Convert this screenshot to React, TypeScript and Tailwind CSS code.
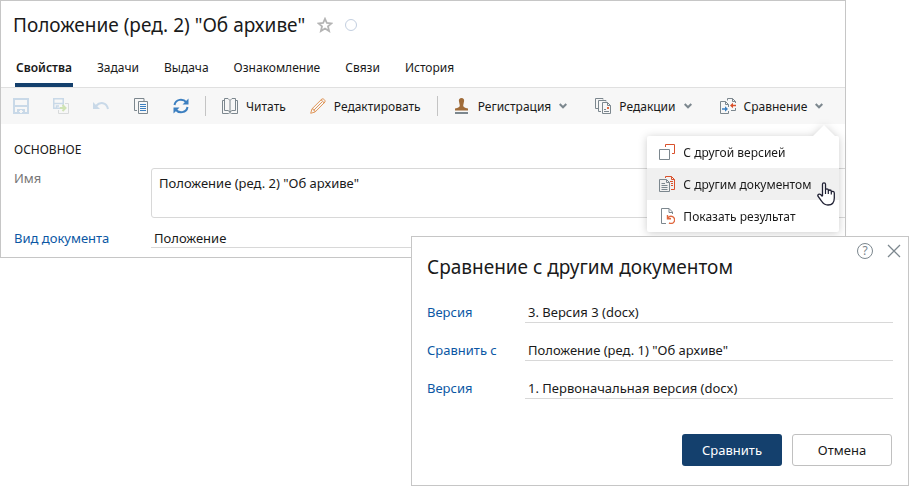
import { useState, type ReactNode } from 'react';
import clsx from 'clsx';

const tabs = [
  'Свойства',
  'Задачи',
  'Выдача',
  'Ознакомление',
  'Связи',
  'История',
];

function Icon({ children, size = 16 }: { children: ReactNode; size?: number }) {
  return (
    <svg
      width={size}
      height={size}
      viewBox={`0 0 ${size} ${size}`}
      fill="none"
      className="shrink-0"
      aria-hidden="true"
    >
      {children}
    </svg>
  );
}

function SaveIcon() {
  return (
    <Icon>
      <path d="M1 1H15V15H1ZM2 8H14M5 15V12H11V15" stroke="#c9d9e8" strokeWidth="2" />
      <path d="M7 12H9V15H7Z" fill="#f7f7f7" />
    </Icon>
  );
}

function SaveCloseIcon() {
  return (
    <Icon>
      <path d="M.75.75H10.25V10.25H.75ZM1 5.5H10M3.5 10V8H6" stroke="#c9d9e8" strokeWidth="1.5" />
      <path d="M12 5.5H15.5V15.5H5.5V12" stroke="#d8dadb" />
      <path d="M7 10H12M9.5 7L12.5 10L9.5 13" stroke="#cfe3b4" strokeWidth="2" />
    </Icon>
  );
}

function UndoIcon() {
  return (
    <Icon>
      <path d="M3 8C7 3.5 13.5 4 15 11" stroke="#c9d9e8" strokeWidth="2" />
      <path d="M0 4V11H7Z" fill="#c9d9e8" />
    </Icon>
  );
}

function CopyIcon() {
  return (
    <Icon>
      <path d="M11 3V.5H1.5V12.5H4" stroke="#7c878e" />
      <path d="M5.5 3.5H14.5V15.5H5.5Z" stroke="#7c878e" />
      <path d="M7 6.5H13M7 8.5H13M7 10.5H13M7 12.5H13" stroke="#3c7fc0" />
    </Icon>
  );
}

function RefreshIcon() {
  return (
    <Icon>
      <path d="M1.5 7C2.5 1 10 .2 13.5 4.5M14.5 9C13.5 15 6 15.8 2.5 11.5" stroke="#3c7fc0" strokeWidth="2" />
      <path d="M15.5 .5V6.5H9.5ZM.5 15.5V9.5H6.5Z" fill="#3c7fc0" />
    </Icon>
  );
}

function BookIcon() {
  return (
    <Icon>
      <path
        d="M2.5 .5H6L8 2.5L10 .5H13.5V12.5H10L8 14L6 12.5H2.5ZM8 2.5V14M2.5 2.5H.5V15.5H6.5L8 14.5L9.5 15.5H15.5V2.5H13.5"
        stroke="#7c878e"
      />
    </Icon>
  );
}

function PencilIcon() {
  return (
    <Icon>
      <path
        d="M.7 15.3L2 10.8L12 .9C13.5 .3 15.7 2.4 15 4L5.1 14L.7 15.3ZM2 10.8C3.7 11 5 12.2 5.1 14M10.7 2.2C12.2 2.3 13.7 3.8 13.8 5.3M3.5 12.5L12.3 3.7"
        stroke="#e0975a"
      />
    </Icon>
  );
}

function StampIcon() {
  return (
    <Icon>
      <path
        d="M7.5 0C9.4 0 10.3 1.4 10.1 3L9.2 7.5C9.2 9 10.5 9.8 14 10.5V12.5H1V10.5C4.5 9.8 5.8 9 5.8 7.5L4.9 3C4.7 1.4 5.6 0 7.5 0Z"
        fill="#a06c3a"
      />
      <path d="M1 14H14V16H1Z" fill="#7c878e" />
    </Icon>
  );
}

function EditionsIcon() {
  return (
    <Icon>
      <path d="M8 1.5V.5H.5V10.5H3M11 3.5V2.5H3.5V13.5H6" stroke="#7c878e" />
      <path d="M7.5 4.5H12.5L15.5 7.5V15.5H7.5ZM12.5 4.5V7.5H15.5M9 13.5H14" stroke="#7c878e" />
      <path d="M12 9H14V11H12Z" fill="#e0683f" />
      <path d="M9 11.5H11" stroke="#7c878e" />
    </Icon>
  );
}

function CompareIcon() {
  return (
    <Icon>
      <path d="M8.5 9V6.5L5.5 3.5H.5V15.5H8.5V13M5.5 3.5V6.5H8.5" stroke="#7c878e" />
      <path d="M7.5 2.5V.5H12.5L15.5 3.5V5M12.5 .5V3.5H15.5M15.5 10V12.5H11" stroke="#7c878e" />
      <path d="M2 11H6" stroke="#3c7fc0" strokeWidth="1.5" />
      <path d="M5 8.2L8 11L5 13.8Z" fill="#3c7fc0" />
      <path d="M12 7.5H16" stroke="#d9512c" strokeWidth="1.5" />
      <path d="M13 4.7L10 7.5L13 10.3Z" fill="#d9512c" />
    </Icon>
  );
}

function VersionsIcon() {
  return (
    <Icon>
      <path d="M6.5 3V.5H15.5V9.5H13" stroke="#d9512c" />
      <path d="M.5 5.5H10.5V15.5H.5Z" stroke="#7c878e" />
    </Icon>
  );
}

function DocumentsIcon() {
  return (
    <Icon>
      <path d="M6.5 2V.5H12.5L15.5 3.5V13.5H12M12.5 .5V3.5H15.5M11 5.5H14M12 7.5H14M12 9.5H14" stroke="#d9512c" />
      <path d="M.5 3.5H7.5L10.5 6.5V15.5H.5ZM7.5 3.5V6.5H10.5M2.5 7.5H6M2.5 9.5H8.5M2.5 11.5H8.5M2.5 13.5H8.5" stroke="#7c878e" />
    </Icon>
  );
}

function ResultIcon() {
  return (
    <Icon>
      <path d="M7 15.5H2.5V.5H10L13.5 4V6M10 .5V4.5H13.5" stroke="#7c878e" />
      <path d="M8.7 10.5A3.6 3.6 0 1 1 10 14.9M8.5 7V10.7H12" stroke="#e0683f" strokeWidth="1.4" />
    </Icon>
  );
}

function Chevron() {
  return (
    <Icon size={8}>
      <path d="M.7 2L4 5.3L7.3 2" stroke="#7c878e" strokeWidth="2" />
    </Icon>
  );
}

function HandCursor() {
  return (
    <svg
      width="18"
      height="24"
      viewBox="0 0 18 24"
      className="pointer-events-none absolute top-[46px] right-1"
      aria-hidden="true"
    >
      <path
        d="M5.5 14V2.2C5.5 .3 8.5 .3 8.5 2.2V8C8.5 6.4 11.3 6.4 11.3 8V9C11.6 7.5 14.3 7.7 14.3 9.4V10.2C14.8 9 17.3 9.2 17.3 11V16C17.3 20.5 14.8 23 11 23C7.3 23 6 21.5 4.5 19L1 14.2C.2 12.5 2.4 11.6 3.6 12.6L5.5 14.5"
        fill="#fff"
        stroke="#1f2033"
        strokeWidth="1.3"
      />
      <path d="M8.5 8V12M11.3 9V12M14.3 10V12.5" stroke="#1f2033" strokeWidth="1.2" />
    </svg>
  );
}

function ToolButton({
  icon,
  label,
  hasMenu = false,
}: {
  icon: ReactNode;
  label: string;
  hasMenu?: boolean;
}) {
  return (
    <button
      type="button"
      className="flex h-9 cursor-pointer items-center gap-2 whitespace-nowrap"
    >
      {icon}
      <span className="pt-0.5">{label}</span>
      {hasMenu && <Chevron />}
    </button>
  );
}

function CompareMenu() {
  const items = [
    { label: 'С другой версией', icon: <VersionsIcon /> },
    { label: 'С другим документом', icon: <DocumentsIcon /> },
    { label: 'Показать результат', icon: <ResultIcon /> },
  ];

  return (
    <div className="absolute top-12 -right-4 z-10 w-48 drop-shadow-[0_1px_4px_rgba(0,0,0,0.2)]">
      <svg
        width="22"
        height="11"
        viewBox="0 0 22 11"
        className="absolute -top-[11px] right-1"
        aria-hidden="true"
      >
        <path d="M0 11L11 0L22 11Z" fill="#fff" />
      </svg>
      <ul className="overflow-hidden rounded-xs bg-white">
        {items.map((item, index) => (
          <li key={item.label}>
            <button
              type="button"
              className={clsx(
                'flex h-8 w-full cursor-pointer items-center gap-2 pl-3 whitespace-nowrap',
                index === 1 && 'bg-[#f0f0f0]'
              )}
            >
              {item.icon}
              <span className="pt-0.5">{item.label}</span>
            </button>
          </li>
        ))}
      </ul>
      <HandCursor />
    </div>
  );
}

function Divider() {
  return <span className="mx-4 h-5 w-px shrink-0 bg-[#c4c4c4]" />;
}

function Toolbar() {
  const actions = [
    { label: 'Сохранить', icon: <SaveIcon /> },
    { label: 'Сохранить и закрыть', icon: <SaveCloseIcon /> },
    { label: 'Отменить', icon: <UndoIcon /> },
    { label: 'Копировать', icon: <CopyIcon /> },
    { label: 'Обновить', icon: <RefreshIcon /> },
  ];

  return (
    <div className="flex h-[37px] items-center border-t border-[#e0e0e0] bg-[#f7f7f7] pl-3 text-xs">
      <div className="flex gap-6">
        {actions.map((action) => (
          <button
            key={action.label}
            type="button"
            aria-label={action.label}
            className="cursor-pointer"
          >
            {action.icon}
          </button>
        ))}
      </div>
      <Divider />
      <div className="flex gap-6">
        <ToolButton icon={<BookIcon />} label="Читать" />
        <ToolButton icon={<PencilIcon />} label="Редактировать" />
      </div>
      <Divider />
      <div className="flex gap-7">
        <ToolButton icon={<StampIcon />} label="Регистрация" hasMenu />
        <ToolButton icon={<EditionsIcon />} label="Редакции" hasMenu />
        <div className="relative">
          <ToolButton icon={<CompareIcon />} label="Сравнение" hasMenu />
          <CompareMenu />
        </div>
      </div>
    </div>
  );
}

function DocumentCard() {
  const [activeTab, setActiveTab] = useState('Свойства');

  return (
    <main className="mr-[63px] border border-[#c6c6c6] pb-[9px]">
      <header className="flex h-12 items-center gap-3 pl-3">
        <h1 className="text-[19px] leading-6">
          Положение (ред. 2) "Об архиве"
        </h1>
        <button type="button" aria-label="В избранное" className="cursor-pointer">
          <Icon>
            <path
              d="M8 1.8L9.9 6L14.5 6.4L11 9.4L12.1 14L8 11.5L3.9 14L5 9.4L1.5 6.4L6.1 6Z"
              stroke="#b4b4b4"
              strokeWidth="1.8"
            />
          </Icon>
        </button>
        <span className="size-3 rounded-full border border-[#c3cfe0]" />
      </header>
      <nav className="flex h-[38px] gap-[23px] pl-[14px] text-xs">
        {tabs.map((tab) => (
          <button
            key={tab}
            type="button"
            onClick={() => setActiveTab(tab)}
            className={clsx(
              'cursor-pointer border-b-4 px-px pt-1',
              tab === activeTab
                ? 'border-[#14406d] font-semibold'
                : 'border-transparent'
            )}
          >
            {tab}
          </button>
        ))}
      </nav>
      <Toolbar />
      <form className="grid grid-cols-[137px_1fr] overflow-hidden pl-[13px] text-[13px]">
        <h2 className="col-span-2 h-11 pt-4 text-xs leading-5">ОСНОВНОЕ</h2>
        <label htmlFor="name" className="leading-5 text-[#777]">
          Имя
        </label>
        <textarea
          id="name"
          defaultValue={'Положение (ред. 2) "Об архиве"'}
          className="-mr-2 h-[50px] resize-none rounded-[3px] border border-[#d8d8d8] px-[7px] py-1 leading-5"
        />
        <label htmlFor="kind" className="pt-[10px] leading-5 text-[#0b57a4]">
          Вид документа
        </label>
        <input
          id="kind"
          defaultValue="Положение"
          className="mt-[10px] h-5 border-b border-[#d8d8d8] px-[3px]"
        />
      </form>
    </main>
  );
}

function CompareDialog() {
  const fields = [
    { id: 'version', label: 'Версия', value: '3. Версия 3 (docx)' },
    {
      id: 'compare-with',
      label: 'Сравнить с',
      value: 'Положение (ред. 1) "Об архиве"',
    },
    {
      id: 'other-version',
      label: 'Версия',
      value: '1. Первоначальная версия (docx)',
    },
  ];

  return (
    <section
      role="dialog"
      aria-labelledby="dialog-title"
      className="relative z-20 -mt-[22px] ml-auto w-[498px] border border-[#c6c6c6] bg-white px-[15px] pb-[19px]"
    >
      <div className="-mr-2 flex h-14 justify-between">
        <h2 id="dialog-title" className="pt-[18px] text-[19px] leading-6">
          Сравнение с другим документом
        </h2>
        <div className="flex h-7 items-center gap-[14px] text-[#7c878e]">
          <button type="button" aria-label="Справка" className="size-4 cursor-pointer rounded-full border border-current text-xs leading-[14px]">
            ?
          </button>
          <button type="button" aria-label="Закрыть" className="cursor-pointer">
            <Icon size={14}>
              <path d="M1 1L13 13M13 1L1 13" stroke="currentColor" strokeWidth="1.3" />
            </Icon>
          </button>
        </div>
      </div>
      <form className="text-[13px]">
        {fields.map((field) => (
          <div key={field.id} className="flex h-[38px] items-center">
            <label htmlFor={field.id} className="w-[98px] pt-px text-[#0b57a4]">
              {field.label}
            </label>
            <input
              id={field.id}
              defaultValue={field.value}
              className="h-[22px] grow border-b border-[#d8d8d8] px-[3px]"
            />
          </div>
        ))}
        <div className="mt-[27px] flex justify-end gap-[10px] pr-px">
          <button
            type="button"
            className="h-8 w-[100px] cursor-pointer rounded-[3px] bg-[#14406d] pt-px text-white"
          >
            Сравнить
          </button>
          <button
            type="button"
            className="h-8 w-[100px] cursor-pointer rounded-[3px] border border-[#c0c0c0] pt-px"
          >
            Отмена
          </button>
        </div>
      </form>
    </section>
  );
}

export default function App() {
  return (
    <div className="bg-white font-['Noto_Sans','Open_Sans',sans-serif] text-[#1a1a1a]">
      <DocumentCard />
      <CompareDialog />
    </div>
  );
}
